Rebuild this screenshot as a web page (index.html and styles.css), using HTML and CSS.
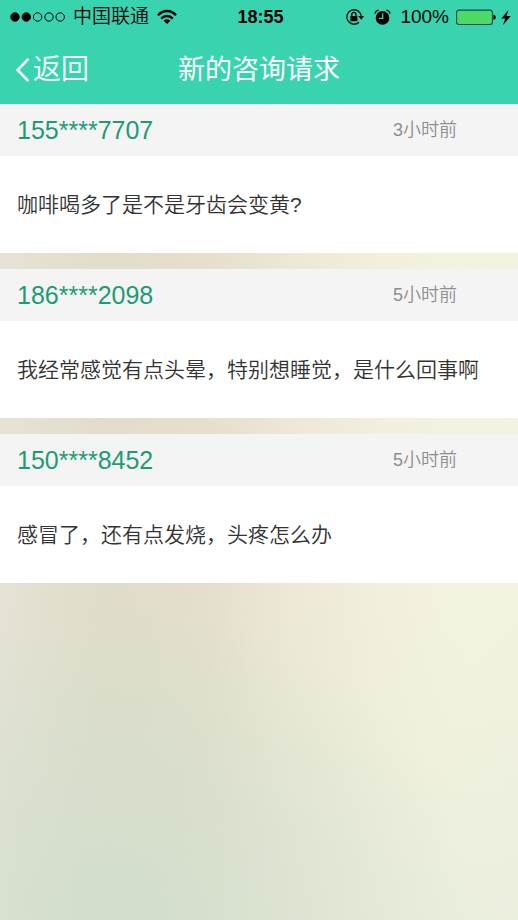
FILE: index.html
```html
<!DOCTYPE html>
<html lang="zh-CN">
<head>
<meta charset="utf-8">
<meta name="viewport" content="width=device-width, initial-scale=1">
<title>新的咨询请求</title>
<link rel="stylesheet" href="styles.css">
</head>
<body>
<header class="top">
  <div class="status">
    <div class="status-left">
      <svg class="signal" width="55" height="12" viewBox="0 0 55 12" aria-hidden="true">
        <g stroke="#000" stroke-width="1">
          <circle cx="5" cy="6" r="4.2"/><circle cx="16.3" cy="6" r="4.2"/>
          <g fill="none"><circle cx="27.6" cy="6" r="4.2"/><circle cx="39" cy="6" r="4.2"/><circle cx="50.2" cy="6" r="4.2"/></g>
        </g>
      </svg>
      <span class="carrier">中国联通</span>
      <svg width="20" height="16" viewBox="0 0 20 16" aria-hidden="true">
        <g fill="none" stroke="#000" stroke-width="2.3">
          <path d="M1 6.2C6 .6 14 .6 19 6.2"/>
          <path d="M4.2 9.6C7.6 6.1 12.4 6.1 15.8 9.6"/>
        </g>
        <path d="M6.6 11.7Q10 8.9 13.4 11.7L10 15Z"/>
      </svg>
    </div>
    <time class="clock">18:55</time>
    <div class="status-right">
      <svg width="20" height="18" viewBox="0 0 20 18" aria-hidden="true">
        <path d="M14 14.2A7.2 7.2 0 1 1 16.2 8.2" fill="none" stroke="#000" stroke-width="1.3"/>
        <path d="M13.2 8H19.2L16.2 11.8Z"/>
        <rect x="5.4" y="8" width="7" height="5.2" rx=".6"/>
        <path d="M6.8 8V6.5a2.1 2.1 0 0 1 4.2 0V8" fill="none" stroke="#000" stroke-width="1.3"/>
      </svg>
      <svg class="alarm" width="17" height="17" viewBox="0 0 17 17" aria-hidden="true">
        <circle cx="8.5" cy="8.9" r="6.8"/>
        <path d="M.9 4.6Q1.4 1.6 4.6 1.2M16.1 4.6Q15.6 1.6 12.4 1.2" fill="none" stroke="#000" stroke-width="1.3"/>
        <path d="M8.7 4.5V9.3H5" fill="none" stroke="#39d3b0" stroke-width="1.3"/>
      </svg>
      <span class="percent">100%</span>
      <svg class="battery" width="40" height="17" viewBox="0 0 40 17" aria-hidden="true">
        <rect x=".6" y="1.1" width="35.8" height="14.4" rx="2.6" fill="none" stroke="#164e43" stroke-width="1.1"/>
        <rect x="1.8" y="2.3" width="33.4" height="12" rx="1.4" fill="#4cd964"/>
        <path d="M37.4 5.6Q39.8 6.4 39.8 8.3T37.4 11Z"/>
      </svg>
      <svg width="10" height="15" viewBox="0 0 10 15" aria-hidden="true">
        <path d="M7.4 0L.3 8.4H4.2L2 15L9.8 6H5.6Z"/>
      </svg>
    </div>
  </div>
  <nav class="nav">
    <button class="back" type="button">
      <svg width="15" height="26" viewBox="0 0 15 26" aria-hidden="true"><path d="M13.4 1.8L2.6 13L13.4 24.2" fill="none" stroke="#fff" stroke-width="2.6"/></svg>
      <span>返回</span>
    </button>
    <h1 class="title">新的咨询请求</h1>
  </nav>
</header>
<main class="list">
  <article class="card">
    <header class="card-head"><h2 class="phone">155****7707</h2><time class="ago">3小时前</time></header>
    <p class="message">咖啡喝多了是不是牙齿会变黄?</p>
  </article>
  <article class="card">
    <header class="card-head"><h2 class="phone">186****2098</h2><time class="ago">5小时前</time></header>
    <p class="message">我经常感觉有点头晕，特别想睡觉，是什么回事啊</p>
  </article>
  <article class="card">
    <header class="card-head"><h2 class="phone">150****8452</h2><time class="ago">5小时前</time></header>
    <p class="message">感冒了，还有点发烧，头疼怎么办</p>
  </article>
</main>
</body>
</html>
```
FILE: styles.css
```css
* {
  box-sizing: border-box;
}

body {
  margin: 0;
  min-height: 100vh;
  font-family: "Liberation Sans", "Noto Sans CJK SC", sans-serif;
  font-weight: 350;
  color: #333;
  background:
    radial-gradient(ellipse 70% 34% at 22% 100%, rgba(207, 221, 203, 0.8), rgba(207, 221, 203, 0)),
    radial-gradient(ellipse 28% 30% at 23% 80%, rgba(216, 218, 200, 0.4), rgba(216, 218, 200, 0)),
    linear-gradient(to bottom, rgba(222, 232, 218, 0) 65%, rgba(222, 232, 218, 0.4) 100%),
    linear-gradient(to right, #e6e2d5 0%, #e2ddca 20%, #e5dfcc 40%, #ece8d5 56%, #f2efdc 74%, #f3f3df 88%, #f3f2e0 100%);
}

h1,
h2,
p {
  margin: 0;
  font-weight: inherit;
}

svg {
  display: block;
  flex: none;
}

.top {
  background: #39d3b0;
}

.status {
  display: grid;
  grid-template-columns: 1fr auto 1fr;
  align-items: center;
  height: 34px;
  padding: 0 7px 0 10px;
  color: #000;
  font-size: 19px;
  line-height: 34px;
}

.status-left,
.status-right {
  display: flex;
  align-items: center;
}

.status-left {
  gap: 8px;
}

.status-right {
  justify-content: flex-end;
  gap: 5px;
}

.clock {
  font-size: 18px;
  font-weight: 700;
}

.percent {
  margin-right: 2px;
}

.alarm {
  margin: 0 4px;
}

.nav {
  display: grid;
  grid-template-columns: 1fr auto 1fr;
  align-items: center;
  height: 70px;
  padding: 2px 15px 0;
  color: #fff;
}

.back {
  display: flex;
  align-items: center;
  justify-self: start;
  gap: 3px;
  padding: 0;
  border: 0;
  background: none;
  color: inherit;
  font: inherit;
  font-size: 28px;
  line-height: 40px;
}

.title {
  font-size: 27px;
  font-weight: 400;
  line-height: 40px;
}

.list {
  display: grid;
  gap: 16px;
}

.card {
  background: #fff;
}

.card-head {
  display: flex;
  align-items: center;
  justify-content: space-between;
  height: 52px;
  padding: 0 61px 0 17px;
  background: #f4f4f4;
}

.phone {
  color: #1d9c74;
  font-size: 25px;
  line-height: 52px;
}

.ago {
  color: #8e8e8e;
  font-size: 18px;
  line-height: 52px;
}

.message {
  padding: 32px 17px;
  font-size: 21px;
  line-height: 33px;
}
```
